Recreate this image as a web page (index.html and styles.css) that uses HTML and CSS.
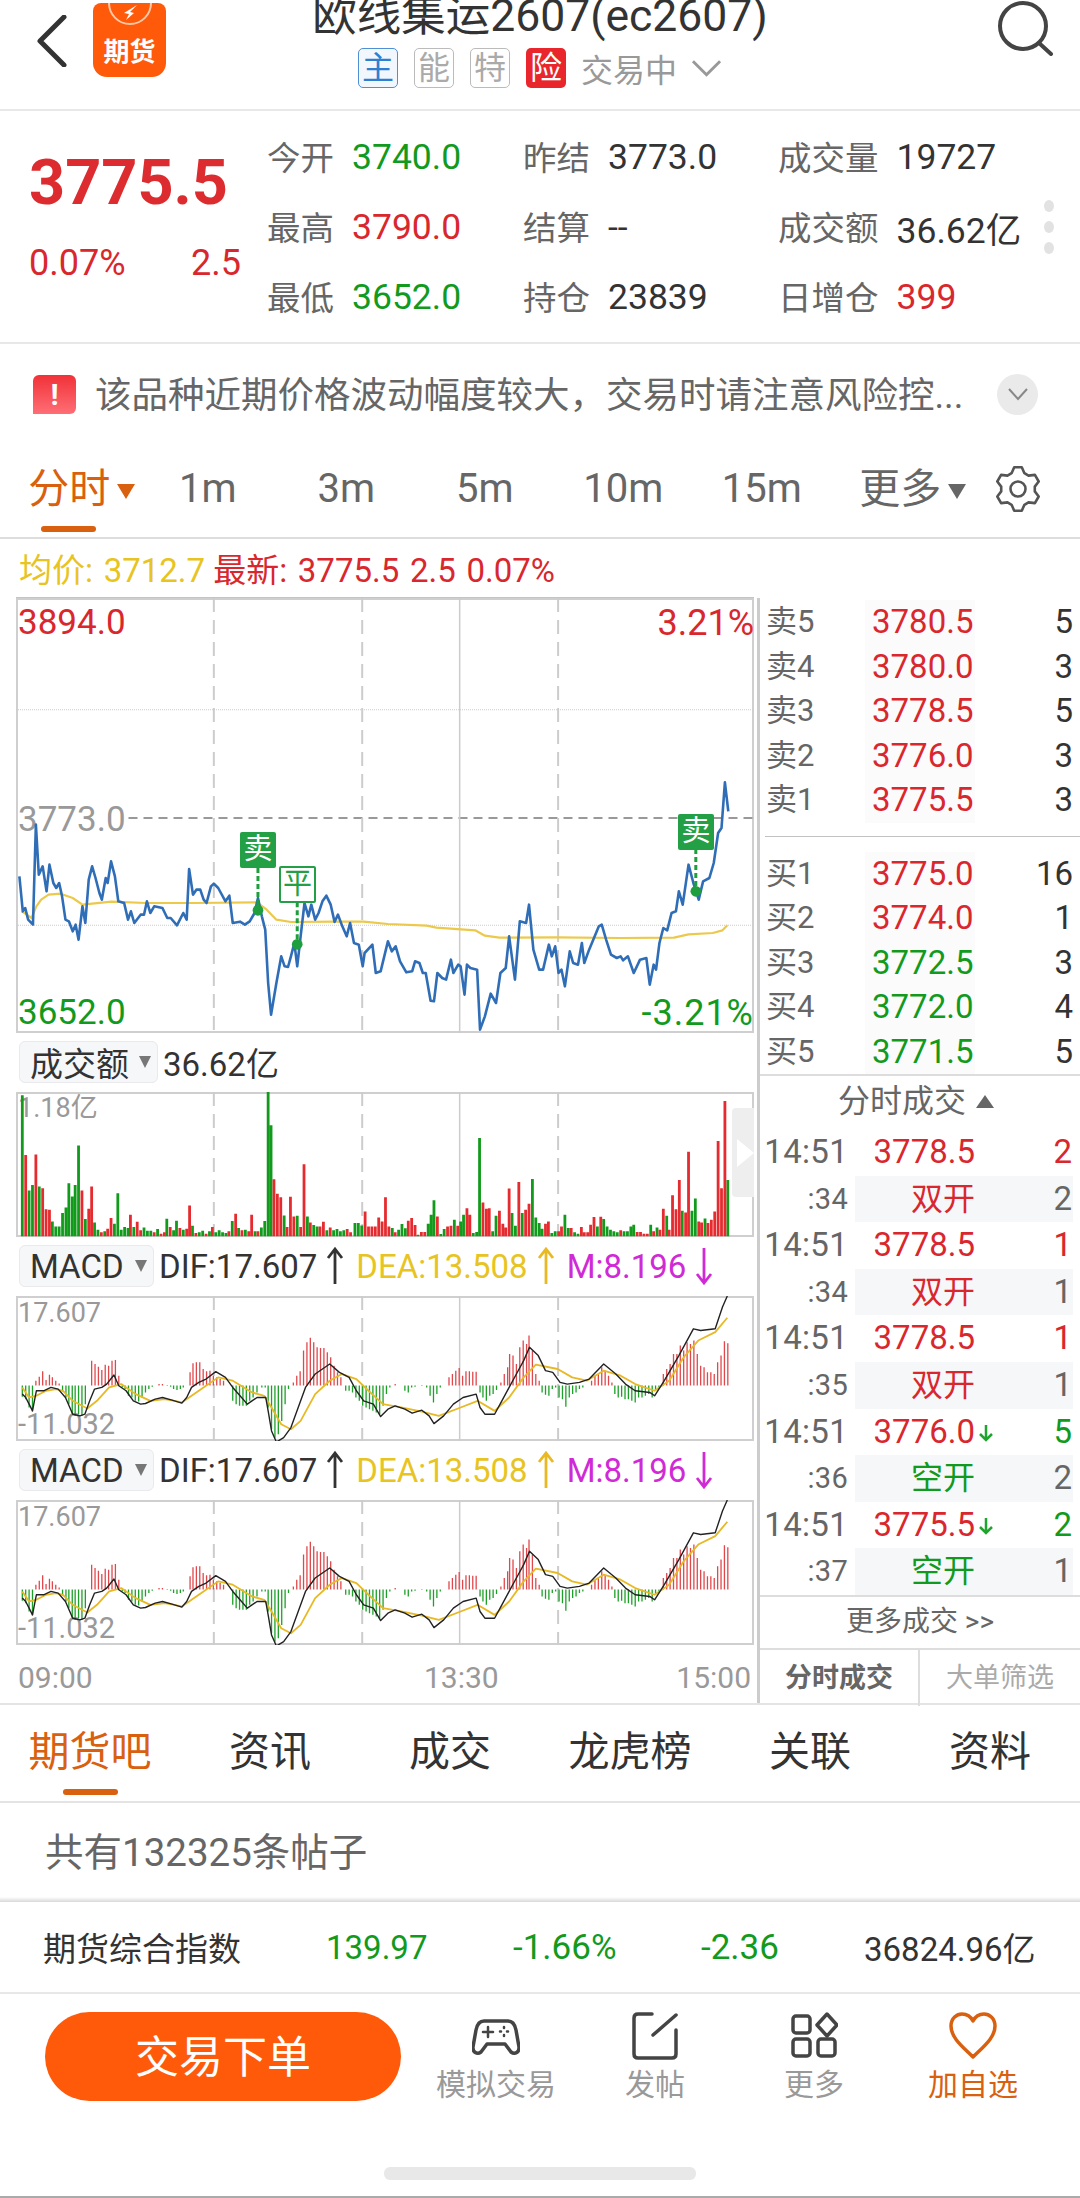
FILE: index.html
```html
<!DOCTYPE html>
<html lang="zh-CN">
<head>
<meta charset="utf-8">
<title>欧线集运2607</title>
<link rel="stylesheet" href="styles.css">
</head>
<body>
<div class="page">

  <header class="topbar">
    <div class="topbar-left">
      <svg class="back-icon" viewBox="0 0 31 52"><polyline points="28,2 4,26 28,50"/></svg>
      <div class="logo">
        <svg class="logo-mark" viewBox="0 0 52 32"><path d="M5 0a21 21 0 0 0 42 0"/><path class="logo-wing" d="M33 2L20 10l5 1-3 6 8-7-4-1z"/></svg>
        <span class="logo-text">期货</span>
      </div>
    </div>
    <div class="topbar-title">
      <div class="title">欧线集运2607(ec2607)</div>
      <div class="subtitle">
        <span class="tag tag-blue">主</span>
        <span class="tag">能</span>
        <span class="tag">特</span>
        <span class="tag tag-red">险</span>
        <span class="status">交易中</span>
        <svg class="status-chevron" viewBox="0 0 32 20"><polyline points="2,3 16,17 30,3"/></svg>
      </div>
    </div>
    <div class="topbar-right">
      <svg class="search-icon" viewBox="0 0 58 56"><circle cx="27" cy="26" r="23"/><line x1="43" y1="43" x2="55" y2="54"/></svg>
    </div>
  </header>

  <section class="quote">
    <div class="quote-price">
      <div class="last">3775.5</div>
      <div class="change"><span>0.07%</span><span>2.5</span></div>
    </div>
    <div class="quote-grid">
      <div class="stat"><span class="stat-label">今开</span><span class="green">3740.0</span></div>
      <div class="stat"><span class="stat-label">昨结</span><span class="dark">3773.0</span></div>
      <div class="stat"><span class="stat-label">成交量</span><span class="dark">19727</span></div>
      <div class="stat"><span class="stat-label">最高</span><span class="red">3790.0</span></div>
      <div class="stat"><span class="stat-label">结算</span><span class="dark">--</span></div>
      <div class="stat"><span class="stat-label">成交额</span><span class="dark">36.62亿</span></div>
      <div class="stat"><span class="stat-label">最低</span><span class="green">3652.0</span></div>
      <div class="stat"><span class="stat-label">持仓</span><span class="dark">23839</span></div>
      <div class="stat"><span class="stat-label">日增仓</span><span class="red">399</span></div>
    </div>
    <div class="quote-dots"><i></i><i></i><i></i></div>
  </section>

  <section class="notice">
    <span class="notice-icon">!</span>
    <span class="notice-text">该品种近期价格波动幅度较大，交易时请注意风险控...</span>
    <span class="notice-toggle"><svg viewBox="0 0 22 14"><polyline points="2,2 11,12 20,2"/></svg></span>
  </section>

  <nav class="period-tabs">
    <div class="period period-text active">分时<i class="caret"></i></div>
    <div class="period">1m</div>
    <div class="period">3m</div>
    <div class="period">5m</div>
    <div class="period">10m</div>
    <div class="period">15m</div>
    <div class="period period-text">更多<i class="caret"></i></div>
    <svg class="gear" viewBox="0 0 48 48"><polygon points="17.6,8.2 20.2,2.3 27.8,2.3 30.4,8.2 34.5,10.6 40.9,9.9 44.7,16.5 40.8,21.6 40.8,26.4 44.7,31.5 40.9,38.1 34.5,37.4 30.4,39.8 27.8,45.7 20.2,45.7 17.6,39.8 13.5,37.4 7.1,38.1 3.3,31.5 7.2,26.4 7.2,21.6 3.3,16.5 7.1,9.9 13.5,10.6"/><circle cx="24" cy="24" r="7.5"/></svg>
  </nav>

  <div class="legend">
    <span class="gold">均价: 3712.7</span>
    <span class="red">最新: 3775.5 2.5 0.07%</span>
  </div>

  <main class="market">
    <div class="charts">
      <div class="chart chart-price">
        <span class="axis-label lab-hi red">3894.0</span>
        <span class="axis-label lab-hi-pct red">3.21%</span>
        <span class="axis-label lab-mid">3773.0</span>
        <span class="axis-label lab-lo green">3652.0</span>
        <span class="axis-label lab-lo-pct green">-3.21%</span>
        <svg class="plot" viewBox="33 25 1522 1305" preserveAspectRatio="none">
          <path class="grid-dot" d="M33 360H1555M33 1007H1555"/>
          <path class="grid-base" d="M265 685H1555"/>
          <path class="grid-dash" d="M441 25V1330M747 25V1330M1151 25V1330"/>
          <path class="grid-solid" d="M948 25V1330"/>
          <polyline class="line-avg" points="45,965 55,975 65,985 75,950 85,930 100,915 125,912 150,925 170,945 190,942 230,936 300,940 400,940 530,938 550,960 570,990 600,997 690,996 750,996 800,1003 880,1008 900,1014 980,1022 1000,1038 1030,1044 1150,1043 1280,1045 1390,1044 1420,1034 1470,1030 1490,1022 1500,1007"/>
          <polyline class="line-price" points="40,860 47,965 52,955 58,990 68,1005 74,705 80,855 88,830 96,905 102,825 110,880 116,895 122,880 128,920 135,990 142,995 150,1025 156,1005 162,1050 170,950 176,1000 183,870 190,830 197,865 205,910 210,930 218,865 222,880 229,815 237,860 244,935 256,940 264,990 270,965 277,1000 290,975 297,975 303,935 310,970 318,950 335,955 345,985 352,985 365,1007 378,970 385,990 390,838 398,915 405,900 413,900 420,930 426,940 435,890 441,882 450,895 465,935 473,918 480,1000 495,996 505,1005 515,995 525,970 532,925 540,980 547,1020 553,1180 559,1275 570,1180 580,1100 587,1130 594,1132 600,1100 607,1060 613,1130 620,1040 628,940 636,980 642,945 650,990 657,970 665,935 673,918 682,945 690,997 697,975 706,1010 715,1040 722,1000 730,1060 740,1065 748,1130 752,1090 768,1065 775,1150 785,1145 800,1055 808,1085 816,1070 825,1115 838,1148 850,1145 856,1115 865,1120 872,1150 878,1150 888,1233 895,1235 902,1150 912,1165 920,1170 930,1110 935,1150 945,1125 950,1130 958,1215 963,1125 970,1135 984,1140 990,1320 1000,1280 1012,1212 1023,1240 1032,1150 1043,1135 1050,1040 1062,1170 1072,995 1085,1000 1091,945 1100,1080 1112,1140 1120,1140 1132,1065 1138,1100 1145,1070 1152,1150 1158,1140 1165,1190 1175,1085 1182,1120 1192,1125 1200,1060 1205,1120 1215,1080 1225,1045 1235,1010 1241,1005 1250,1050 1260,1095 1272,1105 1280,1100 1285,1112 1295,1100 1307,1150 1320,1110 1333,1105 1340,1185 1348,1125 1353,1140 1360,1060 1368,1015 1376,1022 1385,970 1394,965 1400,905 1408,945 1420,825 1430,880 1441,930 1450,875 1463,865 1472,820 1481,730 1488,715 1495,578 1502,665"/>
          <path class="mark-stem" d="M532 835V962M613 938V1064M1435 778V905"/>
          <ellipse class="mark-dot" cx="532" cy="962" rx="11" ry="16"/>
          <ellipse class="mark-dot" cx="613" cy="1064" rx="11" ry="16"/>
          <ellipse class="mark-dot" cx="1435" cy="905" rx="11" ry="16"/>
        </svg>
        <span class="trade-mark mark-a">卖</span>
        <span class="trade-mark mark-b">平</span>
        <span class="trade-mark mark-c">卖</span>
      </div>

      <div class="ind-head">
        <div class="picker picker-wide">成交额<i class="picker-caret"></i></div>
        <span class="ind-value dark">36.62亿</span>
      </div>
      <div class="chart chart-sub">
        <span class="axis-label lab-vol">1.18亿</span>
        <svg class="plot" viewBox="33 155 1522 437" preserveAspectRatio="none">
          <path class="grid-dash" d="M441 155V592M747 155V592M1151 155V592"/>
          <path class="grid-solid" d="M948 155V592"/>
          <path class="bar-green" d="M46 590V165M60 590V452M67 590V435M81 590V440M108 590V545M115 590V560M122 590V560M129 590V520M136 590V503M142 590V430M149 590V470M155 590V435M162 590V316M176 590V538M195 590V548M202 590V570M216 590V575M236 590V552M243 590V460M250 590V570M257 590V562M264 590V565M276 590V562M297 590V563M304 590V573M311 590V573M325 590V568M344 590V537M358 590V572M364 590V543M378 590V570M397 590V558M411 590V578M418 590V573M432 590V575M445 590V578M452 590V572M459 590V578M466 590V580M479 590V544M492 590V565M506 590V570M526 590V575M539 590V563M546 590V544M553 590V155M559 590V255M586 590V527M613 590V528M634 590V530M647 590V556M654 590V560M674 590V572M688 590V572M695 590V568M702 590V575M709 590V572M732 590V550M739 590V550M746 590V557M809 590V565M822 590V570M829 590V553M836 590V566M862 590V585M883 590V552M889 590V525M895 590V481M909 590V583M916 590V568M937 590V540M950 590V545M956 590V525M976 590V580M983 590V577M989 590V294M1016 590V575M1023 590V528M1056 590V520M1063 590V558M1077 590V520M1098 590V417M1105 590V533M1112 590V550M1118 590V567M1138 590V580M1145 590V575M1165 590V525M1172 590V565M1185 590V578M1192 590V582M1232 590V560M1245 590V538M1252 590V560M1259 590V570M1266 590V575M1273 590V578M1287 590V575M1294 590V575M1301 590V560M1307 590V555M1342 590V555M1355 590V563M1375 590V528M1407 590V513M1427 590V513M1434 590V476M1454 590V536M1501 590V420"/>
          <path class="bar-red" d="M53 590V345M74 590V343M88 590V445M95 590V508M102 590V510M169 590V452M183 590V507M189 590V440M209 590V578M222 590V567M229 590V535M269 590V525M283 590V546M290 590V572M318 590V578M332 590V582M339 590V578M351 590V562M371 590V565M385 590V567M391 590V497M404 590V580M425 590V582M438 590V562M472 590V575M486 590V522M499 590V572M513 590V575M519 590V525M532 590V575M565 590V418M572 590V462M579 590V472M592 590V562M599 590V471M606 590V530M620 590V562M627 590V373M640 590V548M660 590V560M667 590V546M681 590V563M716 590V568M723 590V578M753 590V515M760 590V560M767 590V560M774 590V560M781 590V533M788 590V545M795 590V472M802 590V560M815 590V578M842 590V543M849 590V535M856 590V556M869 590V577M876 590V577M902 590V530M923 590V560M930 590V558M944 590V558M963 590V505M969 590V525M996 590V488M1003 590V507M1009 590V505M1030 590V513M1037 590V552M1043 590V563M1050 590V446M1070 590V426M1084 590V510M1091 590V492M1125 590V552M1131 590V545M1152 590V575M1158 590V560M1178 590V565M1199 590V562M1205 590V578M1212 590V578M1218 590V555M1225 590V532M1239 590V531M1280 590V572M1314 590V577M1321 590V577M1328 590V582M1335 590V582M1348 590V575M1361 590V570M1368 590V507M1380 590V570M1387 590V466M1394 590V508M1401 590V420M1414 590V518M1420 590V335M1441 590V545M1447 590V548M1460 590V550M1467 590V540M1474 590V515M1481 590V303M1488 590V445M1495 590V182"/>
        </svg>
        <div class="side-handle"><i></i></div>
      </div>

      <div class="ind-head">
        <div class="picker">MACD<i class="picker-caret"></i></div>
        <span class="ind-value dark">DIF:17.607</span>
        <svg class="ind-arrow stroke-dark" viewBox="0 0 18 40"><path d="M9 38V3M2 12L9 3l7 9"/></svg>
        <span class="ind-value gold">DEA:13.508</span>
        <svg class="ind-arrow stroke-gold" viewBox="0 0 18 40"><path d="M9 38V3M2 12L9 3l7 9"/></svg>
        <span class="ind-value magenta">M:8.196</span>
        <svg class="ind-arrow stroke-magenta" viewBox="0 0 18 40"><path d="M9 2v35M2 28l7 9 7-9"/></svg>
      </div>
      <div class="chart chart-sub">
        <span class="axis-label lab-top">17.607</span>
        <span class="axis-label lab-bot">-11.032</span>
        <svg class="plot" viewBox="33 167 1522 433" preserveAspectRatio="none">
          <g id="macd-plot">
            <path class="grid-dash" d="M441 167V600M747 167V600M1151 167V600"/>
            <path class="grid-solid" d="M948 167V600"/>
            <path class="hist-green" d="M46 434V468M53 434V475M60 434V500M67 434V512M129 434V452M136 434V470M142 434V490M149 434V518M155 434V525M162 434V520M169 434V525M176 434V490M252 434V440M258 434V445M265 434V465M272 434V470M279 434V480M286 434V482M293 434V470M300 434V455M307 434V445M314 434V438M345 434V436M352 434V438M358 434V445M365 434V448M372 434V445M378 434V440M480 434V480M487 434V490M494 434V495M501 434V495M508 434V495M515 434V480M522 434V470M530 434V455M540 434V440M547 434V440M553 434V500M560 434V565M567 434V590M574 434V580M581 434V540M588 434V490M595 434V445M713 434V450M720 434V450M727 434V455M734 434V470M741 434V480M748 434V495M755 434V500M762 434V505M769 434V510M776 434V515M783 434V520M790 434V495M797 434V460M804 434V440M835 434V450M842 434V455M849 434V440M856 434V438M870 434V436M880 434V440M887 434V465M894 434V485M901 434V460M908 434V440M990 434V455M996 434V470M1003 434V480M1010 434V465M1017 434V460M1024 434V448M1118 434V455M1125 434V462M1132 434V465M1139 434V445M1146 434V440M1153 434V470M1160 434V475M1167 434V498M1174 434V470M1181 434V460M1188 434V455M1195 434V445M1202 434V440M1268 434V460M1275 434V470M1282 434V468M1289 434V475M1296 434V475M1303 434V480M1310 434V485M1317 434V470M1324 434V470M1331 434V465M1338 434V460M1345 434V470M1352 434V450M1359 434V445"/>
            <path class="hist-red" d="M74 434V420M81 434V408M88 434V392M95 434V418M102 434V402M108 434V410M115 434V420M122 434V428M189 434V360M196 434V370M203 434V378M210 434V388M217 434V372M224 434V375M231 434V360M238 434V358M245 434V405M328 434V430M335 434V430M392 434V395M398 434V368M405 434V365M412 434V365M419 434V385M426 434V392M433 434V390M440 434V405M447 434V410M454 434V415M461 434V420M605 434V425M612 434V405M619 434V392M626 434V330M633 434V305M640 434V292M647 434V305M654 434V320M661 434V322M668 434V322M675 434V335M682 434V350M689 434V375M696 434V395M703 434V410M815 434V430M926 434V410M933 434V400M940 434V390M947 434V382M954 434V405M961 434V392M968 434V392M975 434V393M982 434V393M1033 434V425M1040 434V400M1047 434V380M1051 434V340M1058 434V345M1065 434V370M1072 434V320M1079 434V300M1086 434V310M1091 434V285M1098 434V330M1105 434V400M1112 434V420M1220 434V420M1227 434V405M1234 434V400M1241 434V380M1248 434V390M1255 434V405M1262 434V425M1368 434V400M1375 434V385M1382 434V370M1389 434V340M1396 434V340M1403 434V315M1410 434V330M1417 434V305M1424 434V310M1431 434V300M1438 434V340M1445 434V375M1452 434V380M1459 434V395M1466 434V395M1473 434V400M1480 434V365M1487 434V345M1494 434V302M1501 434V308"/>
            <polyline class="line-dea" points="46,440 60,470 75,465 95,450 115,445 130,450 150,480 180,503 200,480 225,440 250,430 280,460 310,480 340,475 375,485 410,450 450,410 480,420 520,455 545,465 560,500 580,550 600,565 620,540 650,460 680,420 705,400 735,415 760,450 790,490 830,500 870,512 905,525 950,500 985,480 1020,510 1050,470 1080,410 1105,372 1150,385 1180,410 1210,420 1245,390 1280,405 1310,430 1350,450 1380,420 1410,350 1440,300 1475,275 1500,232"/>
            <polyline class="line-dif" points="46,460 53,470 60,490 67,510 75,450 90,450 105,440 120,445 135,470 150,520 165,525 175,520 185,480 195,445 210,440 220,430 235,403 245,435 260,450 275,480 290,490 300,488 320,475 335,470 355,478 375,487 385,470 395,440 410,425 425,415 445,393 465,410 480,440 495,465 510,490 530,470 548,470 553,510 560,570 570,603 585,590 600,560 615,500 630,440 650,400 680,370 700,395 720,410 735,450 750,480 770,490 785,527 800,505 815,495 835,505 850,517 870,508 885,525 895,548 915,525 935,490 955,470 982,460 990,500 1000,520 1020,520 1035,480 1050,440 1065,400 1080,360 1092,320 1110,345 1125,390 1140,395 1155,425 1170,430 1195,425 1215,415 1245,370 1270,400 1290,430 1310,450 1340,455 1350,465 1370,420 1400,345 1430,265 1445,270 1475,265 1490,200 1500,167"/>
          </g>
        </svg>
      </div>

      <div class="ind-head">
        <div class="picker">MACD<i class="picker-caret"></i></div>
        <span class="ind-value dark">DIF:17.607</span>
        <svg class="ind-arrow stroke-dark" viewBox="0 0 18 40"><path d="M9 38V3M2 12L9 3l7 9"/></svg>
        <span class="ind-value gold">DEA:13.508</span>
        <svg class="ind-arrow stroke-gold" viewBox="0 0 18 40"><path d="M9 38V3M2 12L9 3l7 9"/></svg>
        <span class="ind-value magenta">M:8.196</span>
        <svg class="ind-arrow stroke-magenta" viewBox="0 0 18 40"><path d="M9 2v35M2 28l7 9 7-9"/></svg>
      </div>
      <div class="chart chart-sub">
        <span class="axis-label lab-top">17.607</span>
        <span class="axis-label lab-bot">-11.032</span>
        <svg class="plot" viewBox="33 167 1522 433" preserveAspectRatio="none"><use href="#macd-plot"/></svg>
      </div>

      <div class="time-axis"><span>09:00</span><span class="time-mid">13:30</span><span>15:00</span></div>
    </div>

    <aside class="book">
      <div class="depth">
        <div class="depth-row"><span class="depth-name">卖5</span><span class="depth-price red">3780.5</span><span class="depth-qty">5</span></div>
        <div class="depth-row"><span class="depth-name">卖4</span><span class="depth-price red">3780.0</span><span class="depth-qty">3</span></div>
        <div class="depth-row"><span class="depth-name">卖3</span><span class="depth-price red">3778.5</span><span class="depth-qty">5</span></div>
        <div class="depth-row"><span class="depth-name">卖2</span><span class="depth-price red">3776.0</span><span class="depth-qty">3</span></div>
        <div class="depth-row"><span class="depth-name">卖1</span><span class="depth-price red">3775.5</span><span class="depth-qty">3</span></div>
      </div>
      <div class="depth-gap"></div>
      <div class="depth">
        <div class="depth-row"><span class="depth-name">买1</span><span class="depth-price red">3775.0</span><span class="depth-qty">16</span></div>
        <div class="depth-row"><span class="depth-name">买2</span><span class="depth-price red">3774.0</span><span class="depth-qty">1</span></div>
        <div class="depth-row"><span class="depth-name">买3</span><span class="depth-price green">3772.5</span><span class="depth-qty">3</span></div>
        <div class="depth-row"><span class="depth-name">买4</span><span class="depth-price green">3772.0</span><span class="depth-qty">4</span></div>
        <div class="depth-row"><span class="depth-name">买5</span><span class="depth-price green">3771.5</span><span class="depth-qty">5</span></div>
      </div>
      <div class="ticks-head">分时成交<i class="caret-up"></i></div>
      <div class="ticks">
        <div class="tick"><span class="tick-time">14:51</span><div class="tick-body"><span class="tick-mid red">3778.5</span><span class="tick-qty red">2</span></div></div>
        <div class="tick tick-sub"><span class="tick-time">:34</span><div class="tick-body"><span class="tick-mid red">双开</span><span class="tick-qty">2</span></div></div>
        <div class="tick"><span class="tick-time">14:51</span><div class="tick-body"><span class="tick-mid red">3778.5</span><span class="tick-qty red">1</span></div></div>
        <div class="tick tick-sub"><span class="tick-time">:34</span><div class="tick-body"><span class="tick-mid red">双开</span><span class="tick-qty">1</span></div></div>
        <div class="tick"><span class="tick-time">14:51</span><div class="tick-body"><span class="tick-mid red">3778.5</span><span class="tick-qty red">1</span></div></div>
        <div class="tick tick-sub"><span class="tick-time">:35</span><div class="tick-body"><span class="tick-mid red">双开</span><span class="tick-qty">1</span></div></div>
        <div class="tick"><span class="tick-time">14:51</span><div class="tick-body"><span class="tick-mid red">3776.0</span><svg class="tick-arrow" viewBox="0 0 14 18"><path d="M7 1v15M1 10l6 6 6-6"/></svg><span class="tick-qty green">5</span></div></div>
        <div class="tick tick-sub"><span class="tick-time">:36</span><div class="tick-body"><span class="tick-mid green">空开</span><span class="tick-qty">2</span></div></div>
        <div class="tick"><span class="tick-time">14:51</span><div class="tick-body"><span class="tick-mid red">3775.5</span><svg class="tick-arrow" viewBox="0 0 14 18"><path d="M7 1v15M1 10l6 6 6-6"/></svg><span class="tick-qty green">2</span></div></div>
        <div class="tick tick-sub"><span class="tick-time">:37</span><div class="tick-body"><span class="tick-mid green">空开</span><span class="tick-qty">1</span></div></div>
      </div>
      <div class="ticks-more">更多成交 &gt;&gt;</div>
      <div class="book-tabs"><span class="book-tab active">分时成交</span><span class="book-tab">大单筛选</span></div>
    </aside>
  </main>

  <nav class="info-tabs">
    <div class="info-tab active">期货吧</div>
    <div class="info-tab">资讯</div>
    <div class="info-tab">成交</div>
    <div class="info-tab">龙虎榜</div>
    <div class="info-tab">关联</div>
    <div class="info-tab">资料</div>
  </nav>

  <div class="post-count">共有132325条帖子</div>

  <div class="index-strip">
    <span class="index-name">期货综合指数</span>
    <span class="green">139.97</span>
    <span class="green index-wide">-1.66%</span>
    <span class="green index-wide">-2.36</span>
    <span class="dark">36824.96亿</span>
  </div>

  <footer class="actionbar">
    <div class="actions">
      <button class="trade-btn">交易下单</button>
      <div class="action">
        <svg class="action-icon" viewBox="0 0 48 48"><path d="M12 9H36C41 9 43 13 44 18L47 35C47.5 40 43 43 39 40L33 32H15L9 40C5 43 .5 40 1 35L4 18C5 13 7 9 12 9Z"/><path class="thin" d="M16 15v10M11 20h10"/><path class="thin" d="M32 15v1M32 23v1M28 19.500h1M35 19.500h1"/></svg>
        <span class="action-text">模拟交易</span>
      </div>
      <div class="action">
        <svg class="action-icon" viewBox="0 0 48 48"><path d="M21 2H7Q3 2 3 6V42Q3 46 7 46H41Q45 46 45 42V18"/><path d="M45 3L22 23" /></svg>
        <span class="action-text">发帖</span>
      </div>
      <div class="action">
        <svg class="action-icon" viewBox="0 0 48 48"><rect x="3" y="4" width="17" height="17" rx="3"/><path d="M37 2L47 13 37 24 27 13Z"/><rect x="3" y="27" width="17" height="17" rx="3"/><rect x="28" y="27" width="17" height="17" rx="3"/></svg>
        <span class="action-text">更多</span>
      </div>
      <div class="action action-hot">
        <svg class="action-icon" viewBox="0 0 48 48"><path d="M24 45C14 35 2 26 2 14 2 6 8 2 13 2 18 2 22 5 24 9 26 5 30 2 35 2 40 2 46 6 46 14 46 26 34 35 24 45Z"/></svg>
        <span class="action-text">加自选</span>
      </div>
    </div>
    <div class="home-pill"></div>
  </footer>
</div>
</body>
</html>
```

FILE: styles.css
```css
* { box-sizing: border-box; margin: 0; padding: 0; }

html, body { background: #fff; }

body {
  font-family: Roboto, "Noto Sans CJK SC", sans-serif;
  color: #333;
}

.page {
  position: relative;
  width: 1080px;
  height: 2198px;
  overflow: hidden;
  background: #fff;
}

.red { color: #d9272e; }
.green { color: #119a1d; }
.dark { color: #333; }
.gold { color: #e8c422; }
.magenta { color: #d02ad6; }

/* Top bar */
.topbar {
  display: flex;
  height: 111px;
  border-bottom: 2px solid #e8e8e8;
}
.topbar-left, .topbar-right { width: 200px; display: flex; align-items: flex-start; }
.topbar-left { padding-left: 36px; gap: 26px; }
.topbar-right { justify-content: flex-end; padding-right: 26px; }
.back-icon { width: 31px; height: 52px; margin-top: 15px; fill: none; stroke: #333; stroke-width: 5; stroke-linecap: round; stroke-linejoin: round; }
.logo {
  position: relative;
  width: 73px;
  height: 74px;
  margin-top: 3px;
  background: #ff5a0a;
  border-radius: 8px 8px 14px 14px;
  display: flex;
  flex-direction: column;
  align-items: center;
}
.logo-mark { width: 52px; height: 32px; fill: none; stroke: #ffc9a8; stroke-width: 2; }
.logo-wing { fill: #fff; stroke: none; }
.logo-text { font-size: 26px; line-height: 34px; font-weight: 700; color: #fff; }
.search-icon { width: 58px; height: 56px; fill: none; stroke: #444; stroke-width: 4; stroke-linecap: round; }

.topbar-title { flex: 1; display: flex; flex-direction: column; align-items: center; }
.title { margin-top: -8px; font-size: 44.500px; line-height: 48px; color: #333; white-space: nowrap; }
.subtitle { display: flex; align-items: center; margin-top: 8px; height: 40px; }
.tag {
  width: 40px;
  height: 40px;
  margin-right: 16px;
  border: 1px solid #bbb;
  border-radius: 5px;
  font-size: 32px;
  line-height: 38px;
  text-align: center;
  color: #aaa;
}
.tag-blue { border-color: #4f8fd4; color: #2f7fd0; background: #f1f7fd; }
.tag-red { border: 0; line-height: 40px; background: #e8262c; color: #fff; margin-right: 15px; }
.status { font-size: 32px; color: #999; }
.status-chevron { width: 31px; height: 20px; margin-left: 14px; fill: none; stroke: #999; stroke-width: 3; }

/* Quote summary */
.quote {
  display: flex;
  height: 233px;
  border-bottom: 2px solid #e8e8e8;
}
.quote-price { width: 267px; padding: 37px 26px 0 29px; }
.last { font-size: 63px; line-height: 70px; font-weight: 700; color: #dd2c30; }
.change { display: flex; justify-content: space-between; margin-top: 25px; font-size: 36px; line-height: 40px; color: #d9272e; }
.quote-grid {
  width: 770px;
  padding-top: 11px;
  display: grid;
  grid-template-columns: 256px 255px 1fr;
  grid-auto-rows: 70px;
}
.stat { display: flex; align-items: center; font-size: 35.500px; white-space: nowrap; }
.stat-label { font-size: 33.500px; color: #666; margin: 0 18px 4px 0; }
.quote-dots { align-self: center; display: flex; flex-direction: column; gap: 9px; margin-left: 7px; }
.quote-dots i { display: block; width: 10px; height: 12px; border-radius: 50%; background: #e2e2e2; }

/* Risk notice */
.notice { display: flex; align-items: center; height: 100px; padding: 0 42px 0 33px; }
.notice-icon {
  width: 43px;
  height: 39px;
  border-radius: 6px 6px 6px 0;
  background: linear-gradient(#f03238, #ff6e76);
  color: #fff;
  font-size: 30px;
  font-weight: 700;
  line-height: 39px;
  text-align: center;
}
.notice-text { margin: 0 0 4px 19px; font-size: 36.500px; color: #666; white-space: nowrap; flex: 1; }
.notice-toggle { width: 41px; height: 41px; border-radius: 50%; background: #eaeaea; display: flex; align-items: center; justify-content: center; }
.notice-toggle svg { width: 22px; height: 14px; fill: none; stroke: #888; stroke-width: 2; }

/* Period tabs */
.period-tabs {
  display: grid;
  grid-template-columns: repeat(7, 138.500px) 1fr;
  align-items: center;
  height: 95px;
  padding-bottom: 3px;
  border-bottom: 2px solid #ddd;
  position: relative;
}
.period { position: relative; text-align: center; font-size: 40px; line-height: 88px; color: #666; }
.period-text { font-size: 41px; }
.period.active { color: #d9600f; }
.period.active::after {
  content: "";
  position: absolute;
  left: 41px;
  bottom: 1px;
  width: 55px;
  height: 6px;
  border-radius: 3px;
  background: #d9600f;
}
.caret {
  display: inline-block;
  vertical-align: middle;
  margin: -2px -25px 0 7px;
  border-left: 9px solid transparent;
  border-right: 9px solid transparent;
  border-top: 15px solid #666;
}
.active .caret { border-top-color: #d9600f; }
.gear { width: 48px; height: 48px; margin-left: 24px; fill: none; stroke: #555; stroke-width: 2.6; stroke-linejoin: round; }

.legend { display: flex; align-items: center; gap: 8px; height: 59px; padding: 0 0 2px 19px; font-size: 33px; word-spacing: 2.500px; white-space: nowrap; }

/* Charts and order book */
.market { display: flex; height: 1107px; border-bottom: 2px solid #e4e4e4; }
.charts { width: 757px; padding-left: 16px; }
.chart { position: relative; width: 738px; box-shadow: inset 0 0 0 2px #cfcfcf; }
.chart-price { height: 435px; box-shadow: inset 0 0 0 2px #cfcfcf, 0 -1px 0 #c4c4c4; }
.chart-sub { height: 145px; }
.plot { position: absolute; left: 0; top: 0; width: 100%; height: 100%; }
.plot * { vector-effect: non-scaling-stroke; fill: none; }
.grid-dot { stroke: #ccc; stroke-width: 1; stroke-dasharray: 1 1; }
.grid-base { stroke: #999; stroke-width: 2; stroke-dasharray: 9 6; }
.grid-dash { stroke: #ccc; stroke-width: 2; stroke-dasharray: 14 8; }
.grid-solid { stroke: #ccc; stroke-width: 1.500; }
.line-price { stroke: #2f6eb7; stroke-width: 2.600; stroke-linejoin: round; }
.line-avg { stroke: #ecc94b; stroke-width: 2.200; stroke-linejoin: round; }
.line-dif { stroke: #222; stroke-width: 1.400; stroke-linejoin: round; }
.line-dea { stroke: #e8b923; stroke-width: 1.800; stroke-linejoin: round; }
.bar-green { stroke: #129a1c; stroke-width: 2.800; }
.bar-red { stroke: #e52b2f; stroke-width: 2.800; }
.hist-green { stroke: #1da028; stroke-width: 1.300; }
.hist-red { stroke: #e0484c; stroke-width: 1.300; }
.mark-stem { stroke: #1f9e3e; stroke-width: 3; stroke-dasharray: 5 3; }
.plot .mark-dot { fill: #1f9e3e; }

.axis-label { position: absolute; white-space: nowrap; font-size: 35px; line-height: 40px; }
.lab-mid, .lab-vol, .lab-top, .lab-bot { color: #999; }
.lab-hi { left: 2px; top: 5px; }
.lab-hi-pct { right: 0; top: 5px; font-size: 36px; }
.lab-mid { left: 2px; top: 202px; }
.lab-lo { left: 2px; top: 395px; }
.lab-lo-pct { right: 0; top: 395px; font-size: 36px; letter-spacing: 1px; }
.lab-vol { left: 2px; top: 1px; font-size: 27px; line-height: 30px; }
.lab-top { left: 2px; top: 2px; font-size: 27px; line-height: 30px; }
.lab-bot { left: 2px; top: 113px; font-size: 29px; line-height: 30px; }

.trade-mark {
  position: absolute;
  width: 36px;
  height: 36px;
  border-radius: 2px;
  background: #23a045;
  color: #fff;
  font-size: 29px;
  line-height: 35px;
  text-align: center;
}
.mark-a { left: 224px; top: 234px; }
.mark-b { left: 263px; top: 268px; width: 37px; height: 37px; background: #fff; border: 2px solid #23a045; color: #23a045; line-height: 32px; }
.mark-c { left: 662px; top: 216px; }

.side-handle {
  position: absolute;
  right: 0;
  top: 16px;
  width: 22px;
  height: 89px;
  border-radius: 4px 0 0 4px;
  background: #eee;
  display: flex;
  align-items: center;
  justify-content: flex-end;
}
.side-handle i { border-left: 17px solid #fff; border-top: 14px solid transparent; border-bottom: 14px solid transparent; }

.ind-head { display: flex; align-items: center; height: 42px; margin: 8px 0 9px 3px; white-space: nowrap; }
.picker {
  display: flex;
  align-items: center;
  width: 135px;
  height: 42px;
  margin-right: 5px;
  padding-left: 10px;
  border: 1px solid #e9e9ee;
  border-radius: 6px;
  background: #f6f7f9;
  font-size: 33px;
  color: #333;
}
.picker-wide { width: 139px; }
.picker-caret {
  margin-left: 11px;
  border-left: 6.500px solid transparent;
  border-right: 6.500px solid transparent;
  border-top: 12px solid #777;
}
.picker-wide .picker-caret { margin-left: 10px; }
.ind-value { font-size: 33px; }
.ind-arrow { width: 18px; height: 40px; margin: 0 12px 0 9px; fill: none; stroke-width: 2.800; }
.stroke-dark { stroke: #333; }
.stroke-gold { stroke: #e8b923; }
.stroke-magenta { stroke: #d02ad6; }

.time-axis { position: relative; display: flex; justify-content: space-between; width: 738px; padding: 13px 3px 0 2px; font-size: 30px; line-height: 40px; color: #999; }
.time-mid { position: absolute; left: 408px; }

.book { width: 323px; border-left: 3px solid #ccc; position: relative; }
.depth { padding-top: 2px; }
.depth-row {
  display: grid;
  grid-template-columns: 99px 110px 1fr;
  height: 44.500px;
  align-items: center;
  padding: 0 7px 0 6px;
  font-size: 33px;
  line-height: 44.500px;
}
.depth-name { font-size: 31px; color: #666; }
.depth-price { padding-left: 7px; background: #fbfbfb; }
.depth-qty { text-align: right; color: #333; }
.depth-gap { height: 27px; background: linear-gradient(#999, #999) 0 50%/100% 1px no-repeat; margin: 0 0 0 5px; opacity: .6; }

.ticks-head {
  height: 55px;
  border-top: 2px solid #ddd;
  text-align: center;
  font-size: 32px;
  line-height: 50px;
  color: #666;
  padding-right: 8px;
}
.caret-up {
  display: inline-block;
  vertical-align: middle;
  margin: -4px 0 0 10px;
  border-left: 9.500px solid transparent;
  border-right: 9.500px solid transparent;
  border-bottom: 13px solid #666;
}
.tick { display: grid; grid-template-columns: 95px 1fr; height: 46.600px; font-size: 33px; line-height: 46.600px; margin-right: 7px; }
.tick-time { padding-right: 7px; text-align: right; color: #666; letter-spacing: .3px; }
.tick-sub .tick-time { font-size: 29px; }
.tick-body { position: relative; display: flex; }
.tick-mid { width: 120px; text-align: right; }
.tick-sub .tick-body { background: #f6f7f9; }
.tick-sub .tick-mid { font-size: 32px; }
.tick-qty { margin-left: auto; padding-right: 1px; color: #666; }
.tick-qty.red { color: #d9272e; }
.tick-qty.green { color: #119a1d; }
.tick-arrow { position: absolute; left: 124px; top: 15px; width: 14px; height: 18px; fill: none; stroke: #1fa52d; stroke-width: 2.500; }

.ticks-more {
  height: 55px;
  border-top: 2px solid #ddd;
  border-bottom: 2px solid #ddd;
  text-align: center;
  font-size: 28px;
  line-height: 50px;
  color: #666;
}
.book-tabs { display: grid; grid-template-columns: 160px 1fr; height: 56px; }
.book-tab { font-size: 27px; line-height: 56px; text-align: center; color: #aaa; }
.book-tab.active { font-weight: 700; color: #666; border-right: 2px solid #ddd; }

/* Information tabs */
.info-tabs {
  display: grid;
  grid-template-columns: repeat(6, 180px);
  height: 98px;
  border-bottom: 2px solid #e4e4e4;
}
.info-tab { position: relative; text-align: center; font-size: 41px; line-height: 95px; color: #333; }
.info-tab.active { color: #d9600f; }
.info-tab.active::after {
  content: "";
  position: absolute;
  left: 63px;
  bottom: 6px;
  width: 55px;
  height: 6px;
  border-radius: 3px;
  background: #d9600f;
}
.post-count {
  height: 99px;
  padding-left: 45px;
  font-size: 38.500px;
  line-height: 100px;
  color: #666;
  background: linear-gradient(transparent, #d8d8d8) 0 100%/100% 5px no-repeat;
}
.index-strip {
  display: grid;
  grid-template-columns: 283px 187px 188px 163px 1fr;
  align-items: center;
  height: 92px;
  padding-left: 43px;
  font-size: 33px;
  white-space: nowrap;
  border-bottom: 2px solid #e8e8e8;
}
.index-name { color: #333; }
.index-wide { font-size: 35px; }

/* Bottom action bar */
.actionbar { display: flex; flex-direction: column; align-items: center; height: 204px; border-bottom: 2px solid #aaa; }
.actions { width: 100%; display: flex; align-items: flex-start; padding: 18px 0 0 45px; height: 107px; }
.trade-btn {
  width: 356px;
  height: 89px;
  margin-right: 15.500px;
  padding-bottom: 5px;
  border: 0;
  border-radius: 45px;
  background: #ff5a0a;
  color: #fff;
  font: 44px Roboto, "Noto Sans CJK SC", sans-serif;
}
.action { width: 159px; display: flex; flex-direction: column; align-items: center; }
.action-icon { width: 48px; height: 48px; fill: none; stroke: #444; stroke-width: 3.500; stroke-linejoin: round; stroke-linecap: round; }
.action-icon .thin { stroke-width: 2.500; }
.action-text { margin-top: 7px; font-size: 30px; line-height: 36px; color: #999; white-space: nowrap; }
.action-hot .action-icon { stroke: #d9600f; }
.action-hot .action-text { color: #d9600f; }
.home-pill { width: 312px; height: 13px; margin-top: 66px; border-radius: 6px; background: #e8e8e8; }
```
